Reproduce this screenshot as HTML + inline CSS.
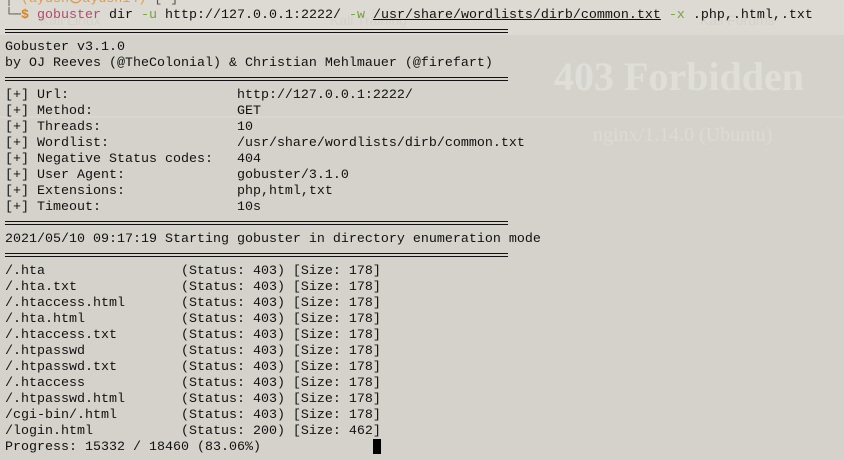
<!DOCTYPE html>
<html><head><meta charset="utf-8"><style>
html,body{margin:0;padding:0;}
body{width:844px;height:460px;overflow:hidden;background:#d4d2cb;position:relative;font-family:"Liberation Mono","DejaVu Sans Mono",monospace;font-size:13.33px;color:#111;}
.top{position:absolute;left:0;top:0;width:844px;height:35px;background:#dcdad3;}
.hl{position:absolute;left:0;top:116px;width:844px;height:2px;background:#d9d7d0;}
.f1{position:absolute;left:554px;top:53px;font-family:"Liberation Serif",serif;font-weight:bold;font-size:40px;color:#e0ded8;white-space:nowrap;}
.f2{position:absolute;left:593px;top:124px;font-family:"Liberation Serif",serif;font-size:20px;color:#dddbd4;white-space:nowrap;}
.bm{position:absolute;top:12px;font-family:"Liberation Sans",sans-serif;font-size:14px;color:#d3d1ca;white-space:nowrap;}
.r{position:absolute;left:5px;height:16px;line-height:16px;white-space:pre;}
.rule{position:absolute;left:5px;width:503px;height:2px;border-top:1px solid #111;border-bottom:1px solid #111;box-sizing:content-box;}
.g{color:#74a53f}.p{color:#b54a6c}.o{color:#d8841c}.d{color:#5a5448}
u{text-decoration:underline;}
.cur{position:absolute;left:373px;top:439px;width:8px;height:15px;background:#000;}
</style></head><body>
<div class="top"></div>
<div class="hl"></div>
<div class="bm" style="left:40px">Kali Linux</div>
<div class="bm" style="left:330px">Kali Training</div>
<div class="bm" style="left:700px">Kali Forums</div>
<div class="f1">403 Forbidden</div>
<div class="f2">nginx/1.14.0 (Ubuntu)</div>

<div class="r" style="top:-8px"><span class="d">│ </span><span class="o" style="opacity:.7">(ayush㉿ayush14)</span><span class="d">-[~]</span></div>
<div class="r" style="top:8px"><span class="d">└─</span><span class="o"><b>$</b></span> <span class="p">gobuster</span> dir <span class="g">-u</span> http://127.0.0.1:2222/ <span class="g">-w</span> <u>/usr/share/wordlists/dirb/common.txt</u> <span class="g">-x</span> .php,.html,.txt</div>
<div class="rule" style="top:29px"></div>
<div class="r" style="top:40px">Gobuster v3.1.0</div>
<div class="r" style="top:56px">by OJ Reeves (@TheColonial) &amp; Christian Mehlmauer (@firefart)</div>
<div class="rule" style="top:77px"></div>
<div class="r" style="top:88px">[+] Url:                     http://127.0.0.1:2222/</div>
<div class="r" style="top:104px">[+] Method:                  GET</div>
<div class="r" style="top:120px">[+] Threads:                 10</div>
<div class="r" style="top:136px">[+] Wordlist:                /usr/share/wordlists/dirb/common.txt</div>
<div class="r" style="top:152px">[+] Negative Status codes:   404</div>
<div class="r" style="top:168px">[+] User Agent:              gobuster/3.1.0</div>
<div class="r" style="top:184px">[+] Extensions:              php,html,txt</div>
<div class="r" style="top:200px">[+] Timeout:                 10s</div>
<div class="rule" style="top:221px"></div>
<div class="r" style="top:232px">2021/05/10 09:17:19 Starting gobuster in directory enumeration mode</div>
<div class="rule" style="top:253px"></div>
<div class="r" style="top:264px">/.hta                 (Status: 403) [Size: 178]</div>
<div class="r" style="top:280px">/.hta.txt             (Status: 403) [Size: 178]</div>
<div class="r" style="top:296px">/.htaccess.html       (Status: 403) [Size: 178]</div>
<div class="r" style="top:312px">/.hta.html            (Status: 403) [Size: 178]</div>
<div class="r" style="top:328px">/.htaccess.txt        (Status: 403) [Size: 178]</div>
<div class="r" style="top:344px">/.htpasswd            (Status: 403) [Size: 178]</div>
<div class="r" style="top:360px">/.htpasswd.txt        (Status: 403) [Size: 178]</div>
<div class="r" style="top:376px">/.htaccess            (Status: 403) [Size: 178]</div>
<div class="r" style="top:392px">/.htpasswd.html       (Status: 403) [Size: 178]</div>
<div class="r" style="top:408px">/cgi-bin/.html        (Status: 403) [Size: 178]</div>
<div class="r" style="top:424px">/login.html           (Status: 200) [Size: 462]</div>
<div class="r" style="top:440px">Progress: 15332 / 18460 (83.06%)</div>
<div class="cur"></div>
</body></html>
